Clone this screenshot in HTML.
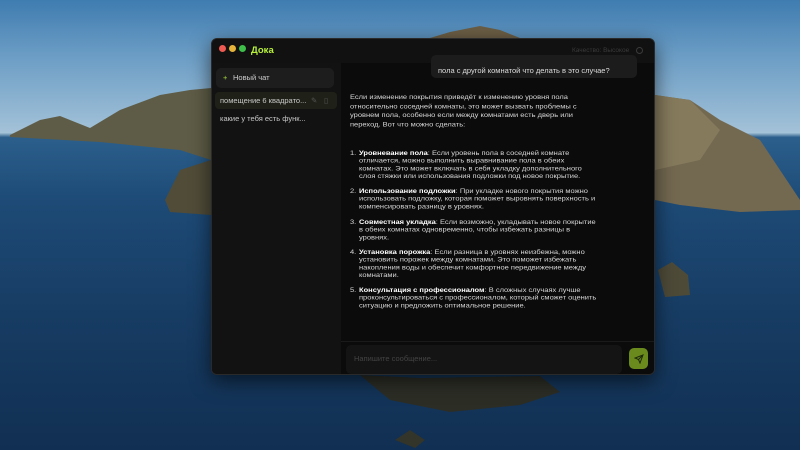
<!DOCTYPE html>
<html><head><meta charset="utf-8"><style>
*{margin:0;padding:0;box-sizing:border-box}
body{width:800px;height:450px;overflow:hidden;position:relative;font-family:"Liberation Sans",sans-serif;
background:linear-gradient(#3f7cb0 0%,#6a9cc4 12%,#94b8d3 25%,#a4c2d8 29.5%,#2c5f8c 30.5%,#1d4a76 45%,#173c63 70%,#112f52 100%)}
.m{position:absolute}
.win{position:absolute;left:211px;top:38px;width:444px;height:337px;background:#0d0d0d;border-radius:6px;overflow:hidden;box-shadow:0 6px 20px rgba(0,0,0,.6);border:1px solid #2a2a2a}
.tb{position:absolute;left:0;top:0;width:100%;height:24px;background:#111}
.dot{position:absolute;top:6px;width:7px;height:7px;border-radius:50%}
.side{position:absolute;left:0;top:24px;width:129px;bottom:0;background:#121212}
.chat{position:absolute;left:129px;top:24px;right:0;bottom:0;background:#0b0b0b}
.t{position:absolute;font-size:7.5px;color:#d8d8d8;line-height:11px}
.s{transform:scaleY(.855);transform-origin:0 0;line-height:9px}
.p{line-height:10.5px}
b{color:#fff}
</style></head><body>
<svg class="m" style="left:0;top:0" width="800" height="450">
<path d="M10 135 L40 120 L60 116 L90 128 L120 110 L160 95 L190 90 L211 88 L211 160 L180 150 L100 142 L10 137Z" fill="#5e5c46"/>
<path d="M165 200 L180 170 L211 160 L211 215 L170 212Z" fill="#504c38"/>
<path d="M655 95 L690 100 L720 120 L760 140 L790 185 L800 200 L800 210 L740 212 L680 205 L655 200Z" fill="#736850"/>
<path d="M655 95 L690 100 L720 130 L700 160 L655 170Z" fill="#857a5c"/>
<path d="M658 270 L672 262 L688 275 L690 295 L665 297Z" fill="#4e4a38"/>
<path d="M360 375 L420 378 L540 376 L560 392 L520 405 L450 412 L390 400Z" fill="#2c2e26"/>
<path d="M395 440 L410 430 L425 440 L415 448Z" fill="#33342a"/>
<path d="M430 38 L450 32 L480 26 L500 30 L520 38Z" fill="#6b5e45"/>
</svg>
<div class="win">
 <div class="tb">
  <div class="dot" style="left:7px;background:#ee5a52"></div>
  <div class="dot" style="left:17px;background:#e6b33a"></div>
  <div class="dot" style="left:27px;background:#3fbf4a"></div>
  <div class="t" style="left:39px;top:6px;font-size:9.5px;font-weight:bold;color:#b8f23a">Дока</div>
  <div class="t" style="left:360px;top:6px;font-size:6.5px;color:#3a3a3a">Качество: Высокое</div>
  <div class="m" style="left:424px;top:8px;width:7px;height:7px;border:1px solid #3a3a3a;border-radius:50%"></div>
 </div>
 <div class="side">
  <div class="m" style="left:4px;top:5px;width:118px;height:20px;background:#1d1d1d;border-radius:5px"></div>
  <div class="t" style="left:11px;top:9px;color:#a8d63a">+</div>
  <div class="t" style="left:21px;top:9px;color:#cfcfcf">Новый чат</div>
  <div class="m" style="left:3px;top:29px;width:122px;height:17px;background:#1f2118;border-radius:4px"></div>
  <div class="t" style="left:8px;top:32px;color:#c8c8c8">помещение 6 квадрато...</div>
  <div class="t" style="left:99px;top:32px;color:#555">✎</div>
  <div class="t" style="left:112px;top:32px;color:#555">▯</div>
  <div class="t" style="left:8px;top:50px;color:#c8c8c8">какие у тебя есть функ...</div>
 </div>
 <div class="chat">
  <div class="m" style="left:90px;top:-8px;width:206px;height:23px;background:#1c1c1c;border-radius:5px"></div>
  <div class="t" style="left:97px;top:2px;color:#ddd">пола с другой комнатой что делать в это случае?</div>
  <div class="t s p" style="left:9px;top:30px;width:245px">Если изменение покрытия приведёт к изменению уровня пола относительно соседней комнаты, это может вызвать проблемы с уровнем пола, особенно если между комнатами есть дверь или переход. Вот что можно сделать:</div>
  <div class="t s" style="left:9px;top:86px">1.</div>
  <div class="t s" style="left:18px;top:86px;width:238px"><b>Уровневание пола</b>: Если уровень пола в соседней комнате отличается, можно выполнить выравнивание пола в обеих комнатах. Это может включать в себя укладку дополнительного слоя стяжки или использования подложки под новое покрытие.</div>
  <div class="t s" style="left:9px;top:124px">2.</div>
  <div class="t s" style="left:18px;top:124px;width:250px"><b>Использование подложки</b>: При укладке нового покрытия можно использовать подложку, которая поможет выровнять поверхность и компенсировать разницу в уровнях.</div>
  <div class="t s" style="left:9px;top:155px">3.</div>
  <div class="t s" style="left:18px;top:155px;width:238px"><b>Совместная укладка</b>: Если возможно, укладывать новое покрытие в обеих комнатах одновременно, чтобы избежать разницы в уровнях.</div>
  <div class="t s" style="left:9px;top:185px">4.</div>
  <div class="t s" style="left:18px;top:185px;width:240px"><b>Установка порожка</b>: Если разница в уровнях неизбежна, можно установить порожек между комнатами. Это поможет избежать накопления воды и обеспечит комфортное передвижение между комнатами.</div>
  <div class="t s" style="left:9px;top:223px">5.</div>
  <div class="t s" style="left:18px;top:223px;width:252px"><b>Консультация с профессионалом</b>: В сложных случаях лучше проконсультироваться с профессионалом, который сможет оценить ситуацию и предложить оптимальное решение.</div>
  <div class="m" style="left:0;top:278px;width:100%;height:1px;background:#1a1a1a"></div>
  <div class="m" style="left:5px;top:282px;width:276px;height:29px;background:#141414;border-radius:5px"></div>
  <div class="t" style="left:13px;top:290px;color:#444">Напишите сообщение...</div>
  <div class="m" style="left:288px;top:285px;width:19px;height:21px;background:#6a8a1e;border-radius:5px"></div>
  <svg class="m" style="left:293px;top:291px" width="10" height="10" viewBox="0 0 10 10"><path d="M9 1 L1 4 L4.5 5.5 L6 9 Z M9 1 L4.5 5.5" fill="none" stroke="#1e2a08" stroke-width="1"/></svg>
 </div>
</div>
</body></html>
